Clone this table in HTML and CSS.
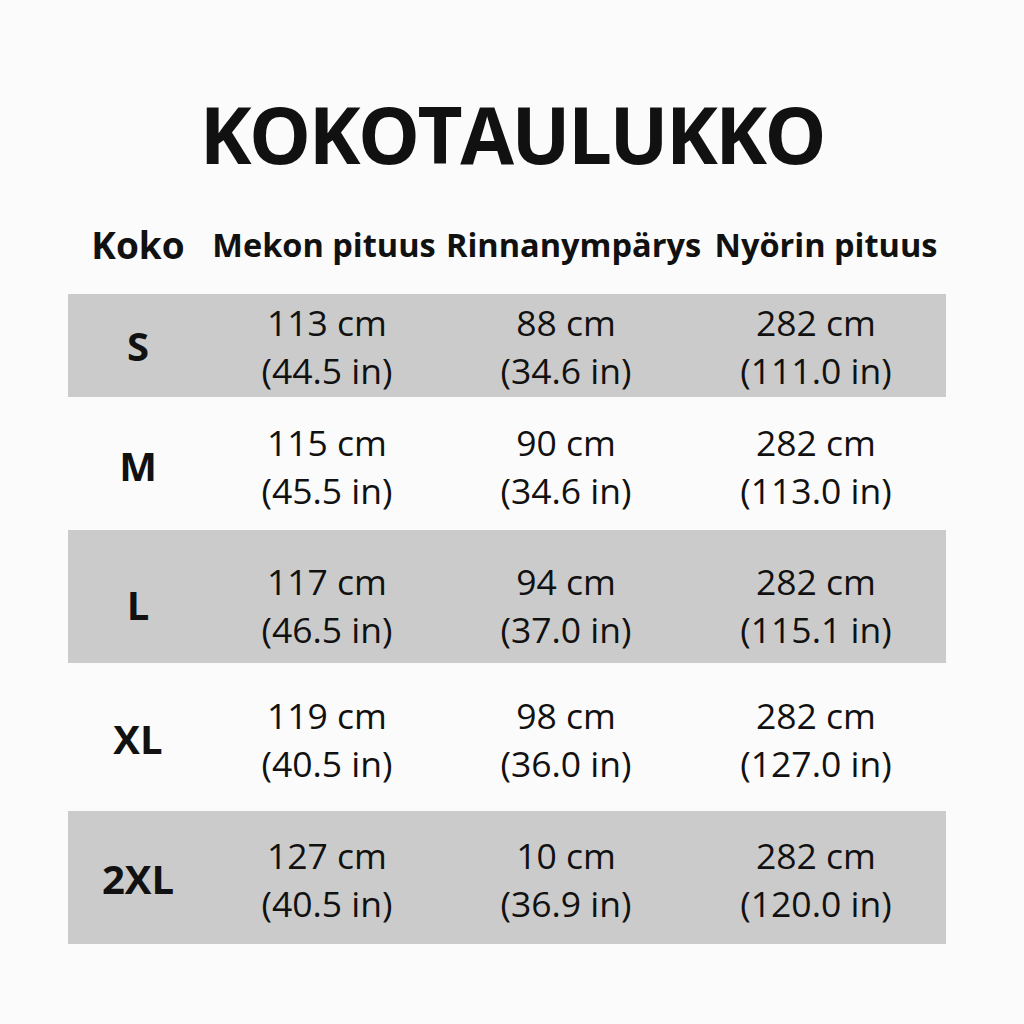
FILE: index.html
```html
<!DOCTYPE html>
<html lang="fi">
<head>
<meta charset="utf-8">
<link rel="stylesheet" href="styles.css">
</head>
<body>
<main class="page">
  <h1 class="title">KOKOTAULUKKO</h1>
  <div class="table">
    <div class="row head">
      <div class="cell size">Koko</div>
      <div class="cell">Mekon pituus</div>
      <div class="cell">Rinnanympärys</div>
      <div class="cell">Nyörin pituus</div>
    </div>
    <div class="row band r-s">
      <div class="cell size">S</div>
      <div class="cell">113 cm<br>(44.5 in)</div>
      <div class="cell">88 cm<br>(34.6 in)</div>
      <div class="cell">282 cm<br>(111.0 in)</div>
    </div>
    <div class="row r-m">
      <div class="cell size">M</div>
      <div class="cell">115 cm<br>(45.5 in)</div>
      <div class="cell">90 cm<br>(34.6 in)</div>
      <div class="cell">282 cm<br>(113.0 in)</div>
    </div>
    <div class="row band r-l">
      <div class="cell size">L</div>
      <div class="cell">117 cm<br>(46.5 in)</div>
      <div class="cell">94 cm<br>(37.0 in)</div>
      <div class="cell">282 cm<br>(115.1 in)</div>
    </div>
    <div class="row r-xl">
      <div class="cell size">XL</div>
      <div class="cell">119 cm<br>(40.5 in)</div>
      <div class="cell">98 cm<br>(36.0 in)</div>
      <div class="cell">282 cm<br>(127.0 in)</div>
    </div>
    <div class="row band r-2xl">
      <div class="cell size">2XL</div>
      <div class="cell">127 cm<br>(40.5 in)</div>
      <div class="cell">10 cm<br>(36.9 in)</div>
      <div class="cell">282 cm<br>(120.0 in)</div>
    </div>
  </div>
</main>
</body>
</html>
```
FILE: styles.css
```css
html, body {
  margin: 0;
  padding: 0;
  background: #fbfbfb;
}
body {
  width: 1024px;
  height: 1024px;
  font-family: "Open Sans", "Liberation Sans", sans-serif;
  color: #111;
}
.page {
  padding: 84px 78px 0 68px;
}
.title {
  margin: 0;
  text-align: center;
  font-size: 78px;
  font-weight: 700;
  line-height: 100px;
  letter-spacing: -2.5px;
  padding-left: 10px;
}
.table {
  margin-top: 37px;
}
.row {
  display: grid;
  grid-template-columns: 140px 238px 240px 260px;
  align-items: center;
}
.cell {
  text-align: center;
  white-space: nowrap;
  font-size: 35.5px;
  line-height: 48px;
  font-weight: 400;
}
.head {
  height: 48px;
  margin-bottom: 25px;
}
.head .cell {
  font-size: 32.5px;
  font-weight: 700;
}
.head .cell.size {
  font-size: 37px;
}
.head .cell:nth-child(2) { margin-left: -12px; margin-right: -6px; }
.head .cell:nth-child(3) { margin-left: 0; margin-right: -12px; }
.head .cell:nth-child(4) { margin-left: 0; margin-right: -20px; }
.cell.size {
  font-weight: 700;
  font-size: 40px;
}
.band {
  background: #cbcbcb;
}
.r-s { height: 103px; padding-top: 0; box-sizing: border-box; }
.r-m { height: 133px; padding-top: 4px; box-sizing: border-box; }
.r-l { height: 133px; padding-top: 16px; box-sizing: border-box; }
.r-xl { height: 148px; padding-top: 4px; box-sizing: border-box; }
.r-2xl { height: 133px; padding-top: 2px; box-sizing: border-box; }
```
